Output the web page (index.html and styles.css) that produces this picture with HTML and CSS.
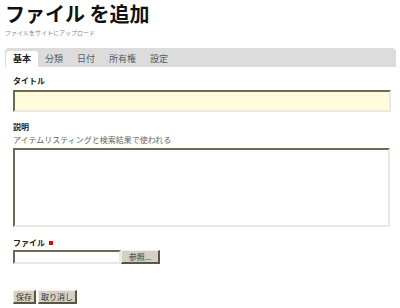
FILE: index.html
```html
<!DOCTYPE html>
<html>
    <head>
        <meta charset="utf-8">
        <title>ファイル を追加</title>
        <link rel="stylesheet" href="styles.css">
    </head>
    <body>
        <div class="page">
            <h1>ファイル を追加</h1>
            <p class="lead">ファイルをサイトにアップロード</p>
            <ul class="tabs">
                <li class="active">基本</li>
                <li>分類</li>
                <li>日付</li>
                <li>所有権</li>
                <li>設定</li>
            </ul>
            <form class="form">
                <div class="field">
                    <label>タイトル</label>
                    <input class="text" type="text">
                </div>
                <div class="field">
                    <label>説明</label>
                    <div class="help">アイテムリスティングと検索結果で使われる</div>
                    <textarea class="area"></textarea>
                </div>
                <div class="field">
                    <label>ファイル <span class="required"></span></label>
                    <div class="file">
                        <input class="file-name" type="text">
                        <button type="button" class="btn browse">参照...</button>
                    </div>
                </div>
                <div class="actions">
                    <button type="button" class="btn">保存</button>
                    <button type="button" class="btn">取り消し</button>
                </div>
            </form>
        </div>
    </body>
</html>
```

FILE: styles.css
```css
body {
    margin: 0;
    font-family: "Noto Sans CJK JP", sans-serif;
    color: #222222;
    background: white;
}
.page {
    padding: 0 4px 0 5px;
}
h1 {
    margin: 0;
    padding-top: 2px;
    font-size: 20px;
    line-height: 24px;
    font-weight: bold;
    color: #111111;
}
.lead {
    margin: 3px 0 0 0;
    font-size: 6px;
    line-height: 8px;
    color: #888888;
}
.tabs {
    display: flex;
    list-style: none;
    margin: 11px 0 0 0;
    padding: 3px 0 0 1px;
    height: 16px;
    background: #dcdcdc;
    border-radius: 4px 4px 0 0;
}
.tabs li {
    padding: 0 7px;
    font-size: 9px;
    line-height: 16px;
    color: #4f5d6b;
}
.tabs li.active {
    background: white;
    border-radius: 3px 3px 0 0;
    font-weight: bold;
    color: #222222;
}
.form {
    padding: 9px 0 0 8px;
}
.field label {
    display: block;
    font-size: 8px;
    line-height: 10px;
    font-weight: bold;
    margin-bottom: 4px;
}
.field + .field label {
    margin-top: 10px;
    margin-bottom: 0;
}
.text,
.area,
.file-name {
    display: block;
    box-sizing: border-box;
    margin: 0;
    padding: 0 3px;
    border-style: solid;
    border-width: 2px;
    border-color: #6f6a58 #ebe8df #ebe8df #6f6a58;
    font-family: inherit;
    outline: none;
}
.text {
    width: 378px;
    height: 22px;
    background: #fffcdc;
}
.help {
    margin-top: 2px;
    font-size: 8px;
    line-height: 11px;
    color: #666666;
}
.area {
    width: 377px;
    height: 79px;
    margin-top: 3px;
    background: white;
    resize: none;
}
.field + .field + .field label {
    margin-top: 11px;
}
.required {
    display: inline-block;
    width: 4px;
    height: 4px;
    margin-left: 2px;
    background: #e00000;
    vertical-align: 1px;
}
.file {
    display: flex;
    margin-top: 2px;
}
.file-name {
    width: 108px;
    height: 14px;
    background: white;
}
.btn {
    box-sizing: border-box;
    height: 14px;
    margin: 0;
    padding: 0 2px;
    font-family: inherit;
    font-size: 8px;
    line-height: 10px;
    color: #333333;
    background: #d6d0c2;
    border-style: solid;
    border-width: 1px 2px 2px 1px;
    border-color: #f2efe8 #5a5546 #5a5546 #f2efe8;
}
.browse {
    width: 39px;
}
.actions {
    display: flex;
    gap: 2px;
    margin-top: 26px;
}
```
